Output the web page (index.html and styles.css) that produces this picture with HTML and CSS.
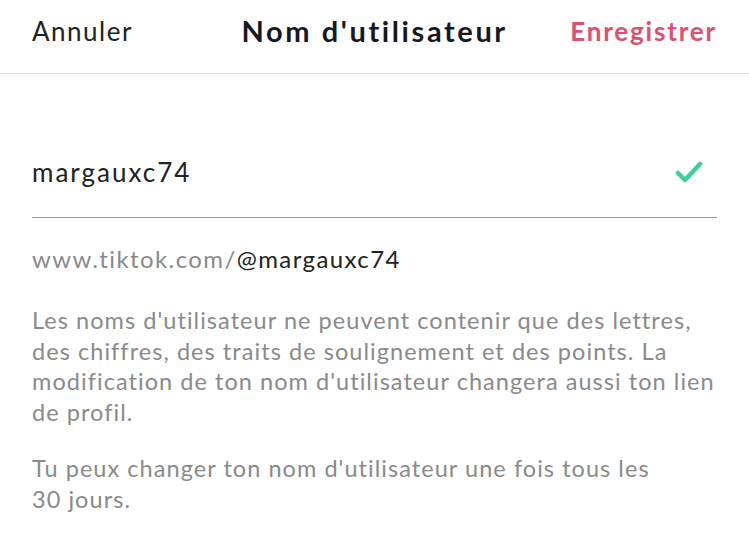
FILE: index.html
```html
<!DOCTYPE html>
<html lang="fr">
<head>
    <meta charset="UTF-8">
    <meta name="viewport" content="width=device-width, initial-scale=1.0">
    <title>Nom d'utilisateur</title>
    <link rel="stylesheet" href="styles.css">
</head>
<body>
    <header class="top-bar">
        <span class="cancel">Annuler</span>
        <h1 class="title">Nom d'utilisateur</h1>
        <span class="save">Enregistrer</span>
    </header>

    <main class="content">
        <div class="field">
            <span class="field-value">margauxc74</span>
            <svg class="check" width="28" height="24" viewBox="0 0 28 24">
                <path d="M3 13 L10 20 L25 4" fill="none" stroke="#3ccf98" stroke-width="4.5" stroke-linecap="round" stroke-linejoin="round"/>
            </svg>
        </div>

        <p class="link"><span class="link-base">www.tiktok.com/</span>@margauxc74</p>

        <p class="hint">Les noms d'utilisateur ne peuvent contenir que des lettres, des chiffres, des traits de soulignement et des points. La modification de ton nom d'utilisateur changera aussi ton lien de profil.</p>

        <p class="hint">Tu peux changer ton nom d'utilisateur une fois tous les<br>30 jours.</p>
    </main>
</body>
</html>
```

FILE: styles.css
```css
body {
    margin: 0;
    background: #fff;
    font-family: Lato, "Liberation Sans", sans-serif;
    color: #161823;
}
.top-bar {
    display: flex;
    align-items: center;
    justify-content: space-between;
    height: 74px;
    box-sizing: border-box;
    padding: 0 32px 12px;
    border-bottom: 1px solid #dcdcdc;
}
.cancel {
    font-size: 26px;
    letter-spacing: 1.5px;
    color: #222;
}
.title {
    margin: 0 0 0 46px;
    font-size: 29px;
    font-weight: 700;
    letter-spacing: 2.6px;
    color: #161823;
}
.save {
    font-size: 26px;
    font-weight: 700;
    letter-spacing: 1.8px;
    color: #e0506f;
}
.content {
    padding: 0 32px;
}
.field {
    display: flex;
    align-items: center;
    justify-content: space-between;
    height: 144px;
    padding-top: 53px;
    box-sizing: border-box;
    padding-right: 14px;
    border-bottom: 1px solid #9a9a9a;
}
.field-value {
    font-size: 26px;
    letter-spacing: 2px;
    color: #222;
}
.link {
    margin: 26px 0 0;
    font-size: 24px;
    letter-spacing: 1.4px;
    color: #222;
}
.link-base {
    color: #8a8a8a;
}
.hint {
    margin: 32px -8px 0 0;
    font-size: 23.5px;
    line-height: 30.5px;
    letter-spacing: 1.05px;
    color: #8a8a8a;
}
.hint + .hint {
    margin-top: 26px;
}
```
